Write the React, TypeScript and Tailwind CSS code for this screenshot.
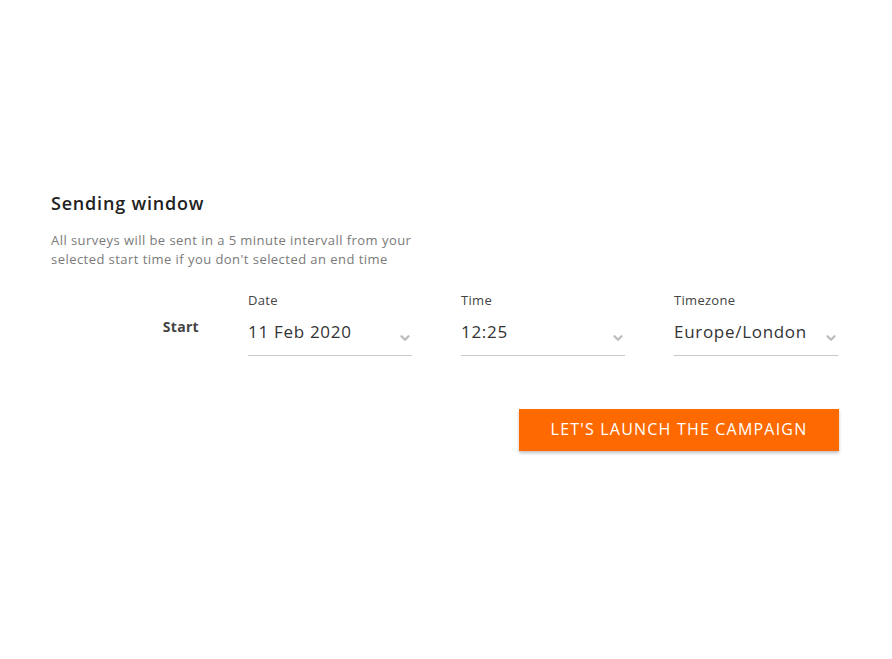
import { ChevronDown } from "lucide-react"

const fields = [
  { label: "Date", value: "11 Feb 2020" },
  { label: "Time", value: "12:25" },
  { label: "Timezone", value: "Europe/London" },
]

function Select({ label, value }: { label: string; value: string }) {
  return (
    <div className="flex flex-col">
      <span className="text-[13px] leading-4 tracking-[0.3px] text-[#444]">{label}</span>
      <div className="mt-[7px] flex h-[41px] items-center justify-between border-b border-[#c9c9c9] pb-[6px]">
        <span className="text-[17px] tracking-[0.7px] text-[#333]">{value}</span>
        <ChevronDown className="mt-3 h-[14px] w-[14px] text-[#bdbdbd]" strokeWidth={4} />
      </div>
    </div>
  )
}

export default function App() {
  return (
    <div className="min-h-[659px] bg-white font-['Open_Sans','Liberation_Sans',sans-serif]">
      <div className="ml-[51px] w-[788px] pt-[191px]">
        <h2 className="text-[18px] font-semibold leading-6 tracking-[0.8px] text-[#222]">Sending window</h2>
        <p className="mt-[16px] w-[380px] text-[13px] leading-[19px] tracking-[0.45px] text-[#7a7a7a]">
          All surveys will be sent in a 5 minute intervall from your selected start time if you don't selected an end
          time
        </p>

        <div className="mt-[23px] grid grid-cols-[148px_164px_164px_164px] gap-x-[49px]">
          <div className="pt-[24px] text-right text-[14px] font-bold tracking-[0.3px] text-[#444]">Start</div>
          {fields.map((f) => (
            <Select key={f.label} label={f.label} value={f.value} />
          ))}
        </div>

        <div className="mt-[53px] flex justify-end">
          <button className="h-[42px] w-[320px] bg-[#ff6a00] pb-[3px] text-[16px] tracking-[1.2px] text-white shadow-[0_2px_3px_rgba(0,0,0,0.25)]">
            LET'S LAUNCH THE CAMPAIGN
          </button>
        </div>
      </div>
    </div>
  )
}
